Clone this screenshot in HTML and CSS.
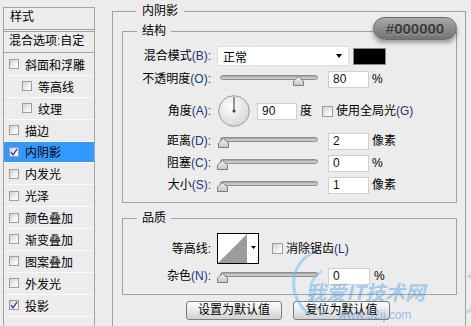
FILE: index.html
```html
<!DOCTYPE html>
<html lang="zh">
<head>
<meta charset="utf-8">
<title>图层样式</title>
<link rel="stylesheet" href="styles.css">
</head>
<body>
<div class="dialog">
  <div class="sidebar">
    <div class="side-head">样式</div>
    <div class="side-blend">混合选项<span class="k">:</span>自定</div>
    <div class="items">
      <div class="item"><span class="cb"></span>斜面和浮雕</div>
      <div class="item sub"><span class="cb"></span>等高线</div>
      <div class="item sub"><span class="cb"></span>纹理</div>
      <div class="item"><span class="cb"></span>描边</div>
      <div class="item active"><span class="cb"><svg class="tick" width="8" height="8" viewBox="0 0 8 8"><path d="M1 4.2 L3 6.8 L7.2 0.8" fill="none" stroke="#2b3f9c" stroke-width="1.3"/></svg></span>内阴影</div>
      <div class="item"><span class="cb"></span>内发光</div>
      <div class="item"><span class="cb"></span>光泽</div>
      <div class="item"><span class="cb"></span>颜色叠加</div>
      <div class="item"><span class="cb"></span>渐变叠加</div>
      <div class="item"><span class="cb"></span>图案叠加</div>
      <div class="item"><span class="cb"></span>外发光</div>
      <div class="item"><span class="cb"><svg class="tick" width="8" height="8" viewBox="0 0 8 8"><path d="M1 4.2 L3 6.8 L7.2 0.8" fill="none" stroke="#2b3f9c" stroke-width="1.3"/></svg></span>投影</div>
      <div class="item"></div>
    </div>
  </div>

  <fieldset class="group outer">
    <legend>内阴影</legend>
    <div class="outer-body">
      <fieldset class="group structure">
        <legend>结构</legend>
        <div class="row r-blend">
          <span class="lbl">混合模式<span class="k">(B):</span></span>
          <div class="select"><span>正常</span><span class="arrow"></span></div>
          <span class="swatch"></span>
        </div>
        <div class="row r-opacity">
          <span class="lbl">不透明度<span class="k">(O):</span></span>
          <div class="slider"><div class="track"></div><svg class="thumb" style="left:76px" width="11" height="10" viewBox="0 0 11 10"><path d="M0.5 9.5 V5 L5.5 0.5 L10.5 5 V9.5 Z" fill="url(#tg)" stroke="#7d7d7d"/></svg></div>
          <span class="num">80</span><span class="unit">%</span>
        </div>
        <div class="row r-angle">
          <span class="lbl">角度<span class="k">(A):</span></span>
          <svg class="dial" width="32" height="32" viewBox="0 0 32 32">
            <defs><radialGradient id="dg" cx="0.4" cy="0.35" r="0.7"><stop offset="0" stop-color="#ffffff"/><stop offset="1" stop-color="#d6d6d6"/></radialGradient></defs>
            <circle cx="16" cy="16" r="15.3" fill="url(#dg)" stroke="#9a9a9a"/>
            <line x1="16" y1="16" x2="16" y2="2" stroke="#555" stroke-width="1.2"/>
            <circle cx="16" cy="16" r="1.6" fill="#444"/>
          </svg>
          <span class="num ang">90</span><span class="unit">度</span>
          <span class="cb rcb"></span><span class="cb-text">使用全局光<span class="k">(G)</span></span>
        </div>
        <div class="row r-slide">
          <span class="lbl">距离<span class="k">(D):</span></span>
          <div class="slider"><div class="track"></div><svg class="thumb" style="left:1px" width="11" height="10" viewBox="0 0 11 10"><path d="M0.5 9.5 V5 L5.5 0.5 L10.5 5 V9.5 Z" fill="url(#tg)" stroke="#7d7d7d"/></svg></div>
          <span class="num">2</span><span class="unit">像素</span>
        </div>
        <div class="row r-slide">
          <span class="lbl">阻塞<span class="k">(C):</span></span>
          <div class="slider"><div class="track"></div><svg class="thumb" style="left:0" width="11" height="10" viewBox="0 0 11 10"><path d="M0.5 9.5 V5 L5.5 0.5 L10.5 5 V9.5 Z" fill="url(#tg)" stroke="#7d7d7d"/></svg></div>
          <span class="num">0</span><span class="unit">%</span>
        </div>
        <div class="row r-slide">
          <span class="lbl">大小<span class="k">(S):</span></span>
          <div class="slider"><div class="track"></div><svg class="thumb" style="left:0" width="11" height="10" viewBox="0 0 11 10"><path d="M0.5 9.5 V5 L5.5 0.5 L10.5 5 V9.5 Z" fill="url(#tg)" stroke="#7d7d7d"/></svg></div>
          <span class="num">1</span><span class="unit">像素</span>
        </div>
      </fieldset>

      <div class="badge">#000000</div>

      <fieldset class="group quality">
        <legend>品质</legend>
        <div class="row r-contour">
          <span class="lbl">等高线:</span>
          <svg class="contour" width="42" height="31" viewBox="0 0 42 31">
            <rect x="0.5" y="0.5" width="41" height="30" fill="#fff" stroke="#000"/>
            <polygon points="1,30 30,1 30,30" fill="#9b9b9b"/>
            <polygon points="34,13 39,13 36.5,16" fill="#000"/>
          </svg>
          <span class="cb rcb aa"></span><span class="cb-text">消除锯齿<span class="k">(L)</span></span>
        </div>
        <div class="row r-noise">
          <span class="lbl">杂色<span class="k">(N):</span></span>
          <div class="slider"><div class="track"></div><svg class="thumb" style="left:0" width="11" height="10" viewBox="0 0 11 10"><path d="M0.5 9.5 V5 L5.5 0.5 L10.5 5 V9.5 Z" fill="url(#tg)" stroke="#7d7d7d"/></svg></div>
          <span class="num wide">0</span><span class="unit pct">%</span>
        </div>
      </fieldset>

      <div class="buttons">
        <button class="btn b1">设置为默认值</button>
        <button class="btn b2">复位为默认值</button>
      </div>
    </div>
  </fieldset>
</div>

<svg class="defs" width="0" height="0">
  <defs>
    <linearGradient id="tg" x1="0" y1="0" x2="0" y2="1"><stop offset="0" stop-color="#f4f4f4"/><stop offset="1" stop-color="#c4c4c4"/></linearGradient>
  </defs>
</svg>

<div class="watermark">
  <svg class="wings" width="300" height="90" viewBox="0 0 300 90">
    <path d="M62 8 C40 20 36 50 60 70" fill="none" stroke="#6fc0f2" stroke-width="3" opacity="0.55"/>
    <path d="M72 26 C56 36 56 56 74 70" fill="none" stroke="#6fc0f2" stroke-width="2.5" opacity="0.5"/>
    <path d="M228 16 C250 28 250 56 226 72" fill="none" stroke="#6fc0f2" stroke-width="3" opacity="0.5"/>
    <path d="M218 30 C232 40 232 58 216 68" fill="none" stroke="#6fc0f2" stroke-width="2.5" opacity="0.45"/>
  </svg>
  <span class="wm-title">我爱IT技术网</span>
  <span class="wm-url">www.52ij.com</span>
</div>
</body>
</html>
```
FILE: styles.css
```css
* { box-sizing: border-box; }
html, body { margin: 0; padding: 0; }
body {
  width: 471px;
  height: 326px;
  overflow: hidden;
  position: relative;
  background: #ececec;
  font-family: "Liberation Sans", "Noto Sans CJK SC", sans-serif;
  font-size: 12px;
  color: #000;
}
.k { color: #22337a; }

.dialog { display: flex; align-items: flex-start; }

/* ---------- left list ---------- */
.sidebar {
  flex: none;
  margin: 7px 0 0 3px;
  width: 92px;
  height: 340px;
  border: 1px solid #a2a2a2;
  background: #ececec;
}
.side-head {
  height: 22px;
  border-bottom: 1px solid #a2a2a2;
  padding-left: 6px;
  line-height: 18px;
}
.side-blend {
  margin-top: 1px;
  height: 22px;
  border-top: 1px solid #a2a2a2;
  border-bottom: 1px solid #a2a2a2;
  padding-left: 5px;
  line-height: 19px;
  white-space: nowrap;
}
.items { padding-top: 1px; }
.item {
  height: 21.875px;
  border-bottom: 1px solid #fafafa;
  display: flex;
  align-items: center;
  padding-left: 5px;
  white-space: nowrap;
}
.item.sub { padding-left: 18px; }
.item.active { background: #3399ff; }
.cb {
  flex: none;
  width: 10px;
  height: 10px;
  margin-right: 6px;
  border: 1px solid #9d9d9d;
  background: linear-gradient(135deg, #cfcfcf, #f7f7f7 70%);
  display: flex;
  align-items: center;
  justify-content: center;
}
.tick { display: block; }

/* ---------- group boxes ---------- */
.group {
  min-width: 0;
  border: 1px solid #a0a0a0;
}
.group > legend {
  margin-left: 14px;
  padding: 0 5px;
  line-height: 16px;
  font-size: 12px;
}
.group.outer {
  flex: none;
  margin: 3px 0 0 17px;
  width: 354px;
  padding: 0 8px 60px 9px;
}
.group.outer > legend { padding: 0 6px; }
.outer-body { position: relative; padding-top: 4px; }

.group.structure { margin: 0; padding: 0 0 9px 0; }
.group.quality { margin: 7px 0 0 0; padding: 0 0 10px 0; }

.row { display: flex; align-items: center; white-space: nowrap; }
.lbl { flex: none; width: 88px; text-align: right; line-height: 16px; }

.r-blend { margin-top: 7px; height: 20px; }
.r-opacity { margin-top: 5px; height: 16px; }
.r-angle { margin-top: 8px; height: 32px; }
.r-slide { margin-top: 6px; height: 16px; }
.r-contour { margin-top: 7px; height: 31px; }
.r-noise { margin-top: 4px; height: 16px; }

.select {
  flex: none;
  margin-left: 6px;
  width: 132px;
  height: 20px;
  background: #fff;
  border: 1px solid #dedede;
  display: flex;
  align-items: center;
  justify-content: space-between;
  padding: 0 5px 0 5px;
}
.arrow {
  width: 0; height: 0;
  border-left: 3.5px solid transparent;
  border-right: 3.5px solid transparent;
  border-top: 4px solid #000;
  margin-right: 1px;
}
.swatch {
  flex: none;
  margin-left: 4px;
  width: 33px;
  height: 17px;
  background: #000;
  border: 1px solid #8a8a8a;
}

.slider {
  flex: none;
  position: relative;
  margin-left: 6px;
  width: 104px;
  height: 16px;
}
.track {
  margin: 4px 3px 0;
  height: 5px;
  border-radius: 3px;
  border: 1px solid #8d8d8d;
  background: linear-gradient(#9a9a9a, #d6d6d6 70%, #bdbdbd);
}
.thumb { position: absolute; top: 5px; display: block; }

.num {
  flex: none;
  margin-left: 7px;
  width: 41px;
  height: 17px;
  background: #fff;
  border: 1px solid #cfcfcf;
  padding-left: 4px;
  line-height: 15px;
  color: #111;
}
.num.ang { width: 40px; }
.num.wide { width: 42px; }
.unit { margin-left: 3px; line-height: 16px; }
.unit.pct { margin-left: 4px; }

.dial { flex: none; display: block; margin-left: 7px; }

.rcb { width: 11px; height: 11px; margin-right: 3px; margin-left: 10px; }
.cb-text { line-height: 16px; }
.aa { margin-left: 13px; }

.contour { flex: none; display: block; margin-left: 6px; }

.buttons { display: flex; gap: 11px; margin-top: 6px; padding-left: 64px; }
.btn {
  margin: 0;
  height: 19px;
  padding: 0;
  border: 1px solid #7c7c7c;
  border-radius: 3px;
  background: linear-gradient(#fefefe, #e4e4e4 60%, #d2d2d2);
  font-family: "Liberation Sans", "Noto Sans CJK SC", sans-serif;
  font-size: 12px;
  line-height: 17px;
  color: #000;
}
.b1 { width: 96px; }
.b2 { width: 97px; }

/* ---------- badge overlay ---------- */
.badge {
  position: absolute;
  top: -2px;
  right: 0;
  width: 84px;
  height: 23px;
  border-radius: 12px;
  border: 1px solid #6c6c6c;
  background: linear-gradient(#a9a9a9, #8a8a8a 55%, #727272);
  box-shadow: 0 3px 4px rgba(0,0,0,0.35);
  color: #3a3a3a;
  font-family: "Liberation Sans", sans-serif;
  font-weight: bold;
  font-size: 15px;
  line-height: 21px;
  text-align: center;
  text-shadow: 0 1px 0 rgba(255,255,255,0.35);
}

.defs { position: absolute; }

/* ---------- watermark overlay ---------- */
.watermark {
  position: absolute;
  left: 250px;
  top: 245px;
  width: 221px;
  height: 81px;
  pointer-events: none;
}
.wings { position: absolute; left: 0; top: 0; }
.wm-title {
  position: absolute;
  left: 56px;
  top: 35px;
  font-family: "Noto Sans CJK SC", sans-serif;
  font-weight: bold;
  font-style: italic;
  font-size: 20px;
  line-height: 24px;
  color: rgba(70, 160, 235, 0.45);
}
.wm-url {
  position: absolute;
  left: 88px;
  top: 63px;
  font-family: "Liberation Sans", sans-serif;
  font-size: 12px;
  line-height: 14px;
  color: rgba(70, 150, 235, 0.55);
}
```
